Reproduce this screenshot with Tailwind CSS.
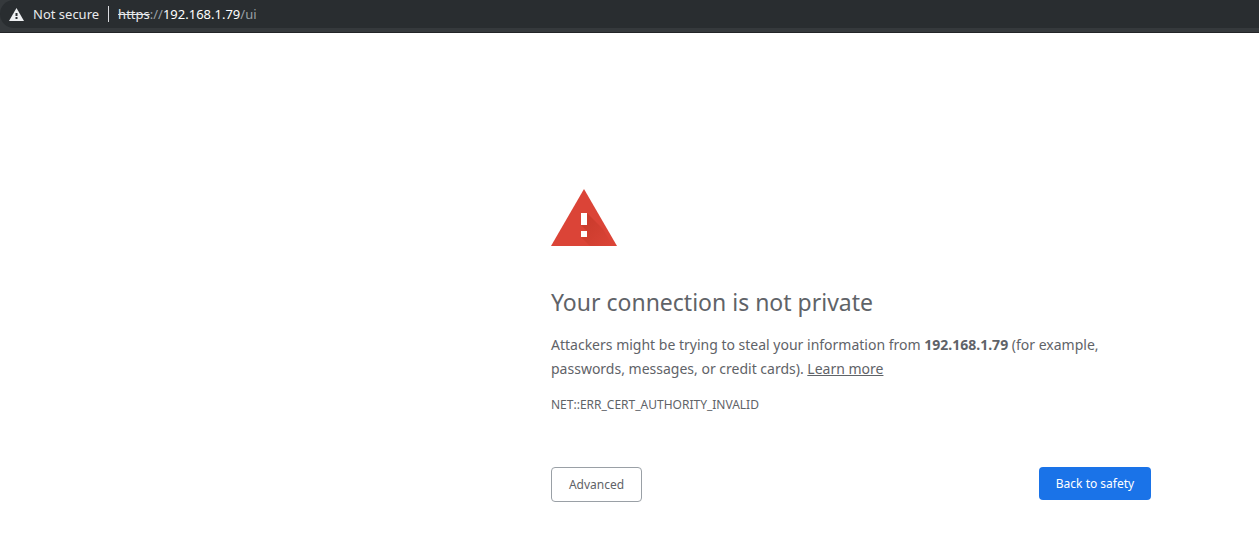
<!DOCTYPE html>
<html lang="en">
<head>
<meta charset="utf-8">
<meta name="viewport" content="width=device-width, initial-scale=1">
<title>Privacy error</title>
<script src="https://cdn.jsdelivr.net/npm/@tailwindcss/browser@4"></script>
</head>
<body class="bg-white font-['Noto_Sans',sans-serif] text-[#5f6368]">
<header class="border-b border-[#232427] bg-[#35393c] pb-1">
  <div class="flex h-7 items-center rounded-l-full bg-[#292d30] pl-[9px] text-[13px] leading-5 text-[#e8eaed]">
    <svg class="h-[13px] w-[15px]" viewBox="0 0 15 13" aria-hidden="true">
      <path fill="#eef0f2" d="M7.500 0 15 13H0Z"/>
      <path fill="#292d30" d="M6.500 5h2v3h-2zM6.500 9h2v2h-2z"/>
    </svg>
    <span class="ml-[9px]">Not secure</span>
    <span class="ml-[9px] h-4 w-px bg-[#dadce0]"></span>
    <span class="ml-[9px] text-[#9aa0a6]"><s class="text-[#e8eaed]">https</s>://<span class="text-white">192.168.1.79</span>/ui</span>
  </div>
</header>
<main class="mr-[108px] ml-auto w-full max-w-[600px] pt-[156px]">
  <svg class="block h-[57px] w-[66px]" viewBox="0 0 66 57" aria-hidden="true">
    <defs>
      <linearGradient id="shade" x1="0" y1="0" x2="1" y2="1">
        <stop offset="0" stop-color="#b93221" stop-opacity=".6"/>
        <stop offset="1" stop-color="#b93221" stop-opacity="0"/>
      </linearGradient>
    </defs>
    <path fill="#db4437" d="M33 0 66 57H0Z"/>
    <path fill="url(#shade)" d="M36 24 52 40 62 57H39L30 48 36 42 30 36H36Z"/>
    <path fill="#fff" d="M30 24h6v12h-6zM30 42h6v6h-6z"/>
  </svg>
  <h1 class="mt-10 text-[23px] leading-8">Your connection is not private</h1>
  <p class="mt-[15px] text-[14px] leading-6">Attackers might be trying to steal your information from <strong class="font-bold">192.168.1.79</strong> (for example, passwords, messages, or credit cards). <a href="#" class="underline">Learn more</a></p>
  <p class="mt-4 text-[12px] leading-4">NET::ERR_CERT_AUTHORITY_INVALID</p>
  <div class="mt-[54px] flex items-start justify-between">
    <button type="button" class="h-[35px] w-[91px] rounded border border-[#9aa0a6] text-[12px]">Advanced</button>
    <button type="button" class="h-[33px] w-28 rounded bg-[#1a73e8] text-[12px] text-white">Back to safety</button>
  </div>
</main>
</body>
</html>
